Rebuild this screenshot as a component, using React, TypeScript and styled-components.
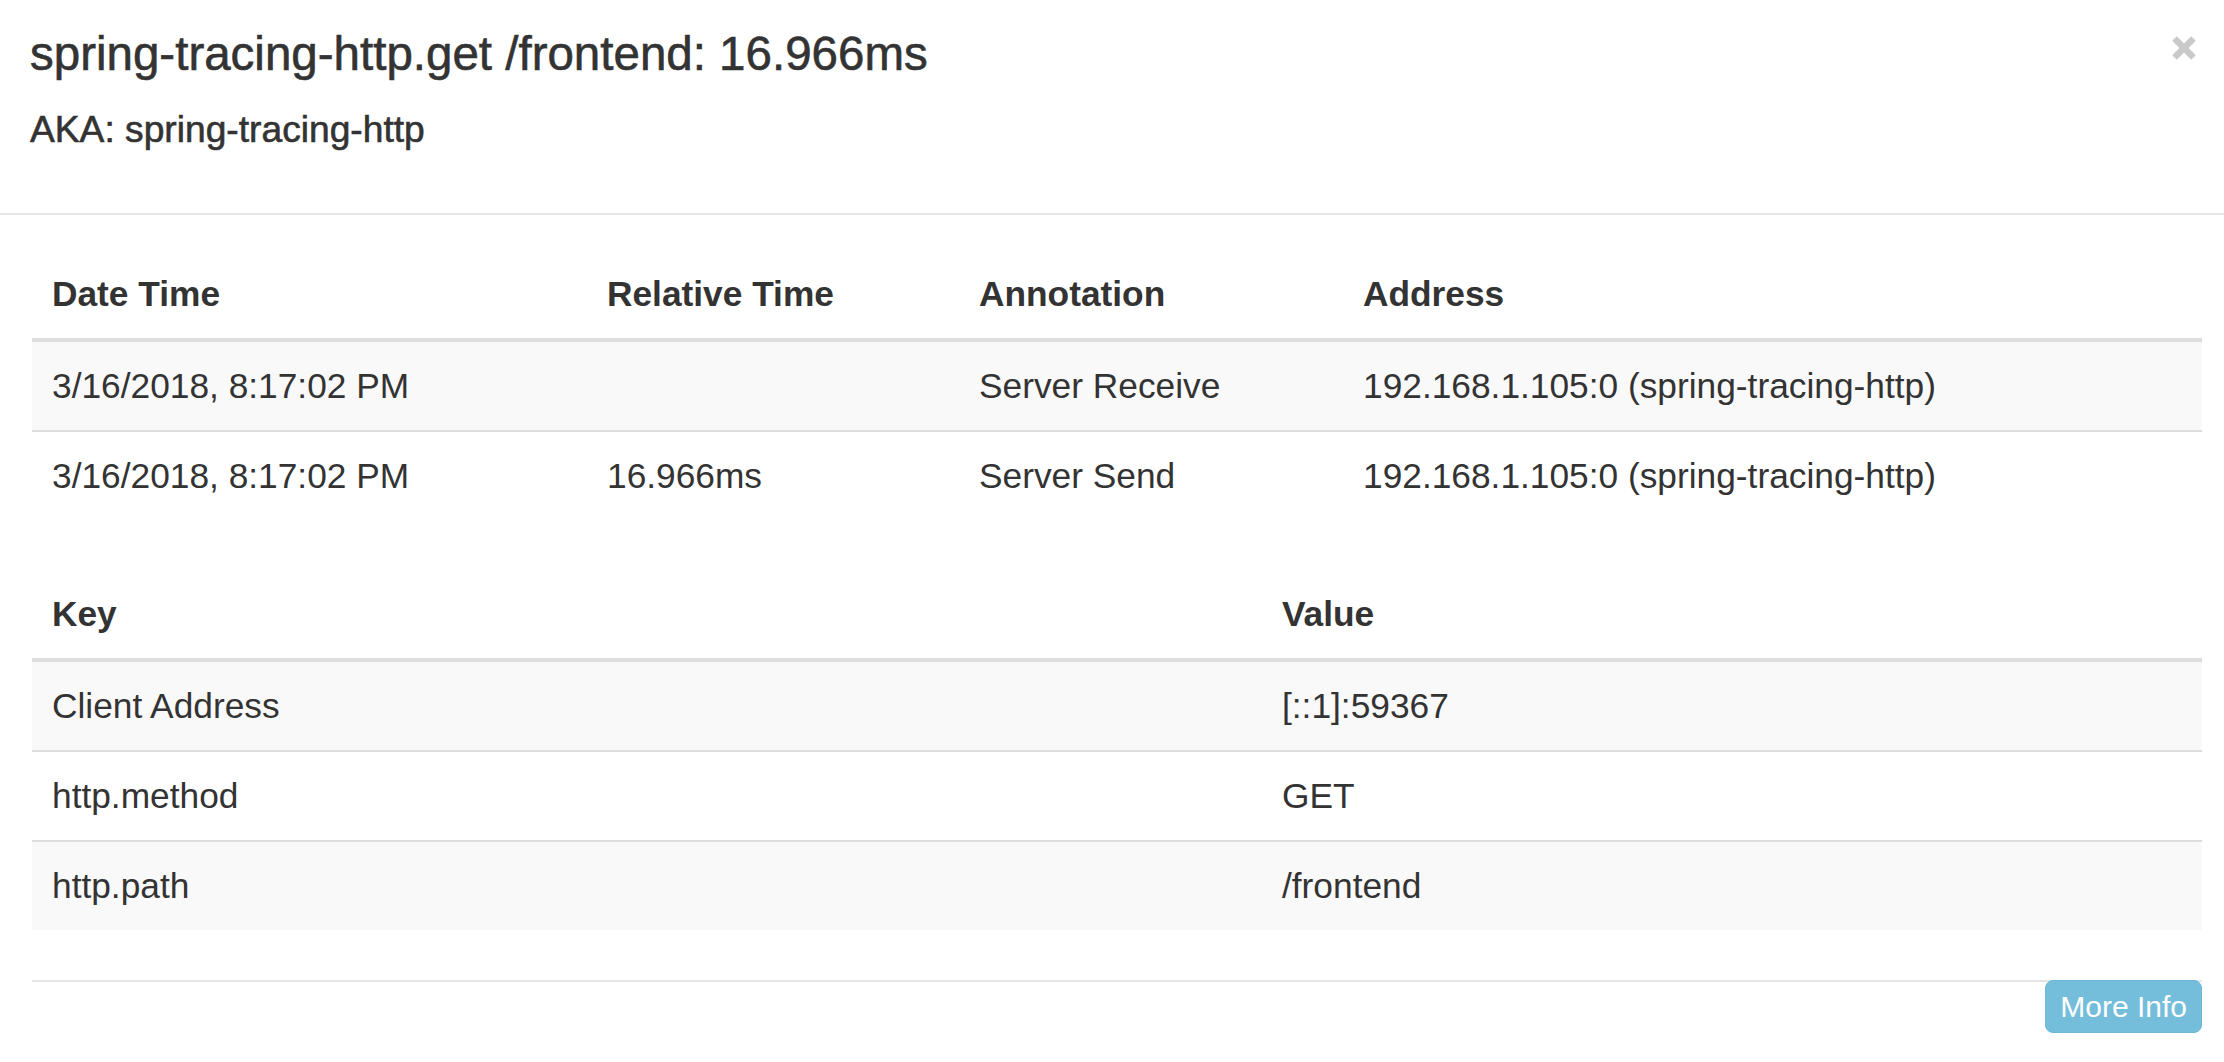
import React from "react";
import styled, { createGlobalStyle } from "styled-components";

const GlobalStyle = createGlobalStyle`
  html, body {
    margin: 0;
    padding: 0;
    background: #ffffff;
  }
  body {
    font-family: "Liberation Sans", Arial, "Helvetica Neue", sans-serif;
    color: #333333;
  }
  * { box-sizing: border-box; }
`;

const Modal = styled.div`
  width: 2224px;
  background: #ffffff;
  display: flex;
  flex-direction: column;
`;

const Header = styled.div`
  display: flex;
  justify-content: space-between;
  align-items: flex-start;
  padding: 22px 27px 64px 30px;
  border-bottom: 2px solid #e5e5e5;
`;

const TitleBlock = styled.div`
  display: flex;
  flex-direction: column;
`;

const Title = styled.h4`
  margin: 0;
  font-size: 47.5px;
  line-height: 64px;
  font-weight: 400;
  color: #333333;
  -webkit-text-stroke: 0.6px #333333;
`;

const Aka = styled.h5`
  margin: 23px 0 0 0;
  font-size: 37.2px;
  line-height: 40px;
  font-weight: 400;
  color: #333333;
  -webkit-text-stroke: 0.6px #333333;
`;

const CloseButton = styled.button`
  margin-top: 13px;
  padding: 0;
  border: 0;
  background: transparent;
  width: 26px;
  height: 26px;
  display: flex;
  cursor: pointer;
`;

const Body = styled.div`
  padding: 35px 22px 0 32px;
`;

const DataTable = styled.table`
  width: 100%;
  table-layout: fixed;
  border-collapse: separate;
  border-spacing: 0;
  margin-bottom: 50px;
  font-size: 35.3px;
  color: #333333;
`;

const Col = styled.col<{ $w: number }>`
  width: ${(p) => p.$w}px;
`;

const HeadCell = styled.th`
  text-align: left;
  font-weight: 700;
  padding: 19px 20px;
  line-height: 50px;
  border-bottom: 4px solid #dddddd;
  white-space: nowrap;
`;

const Row = styled.tr`
  &:nth-of-type(odd) td {
    background: #f9f9f9;
  }
  & + & td {
    border-top: 2px solid #dddddd;
  }
`;

const Cell = styled.td`
  padding: 19px 20px;
  line-height: 50px;
  font-weight: 400;
  white-space: nowrap;
  vertical-align: top;
`;

const Footer = styled.div`
  margin: 0 22px 0 32px;
  border-top: 2px solid #e5e5e5;
  display: flex;
  justify-content: flex-end;
  padding-bottom: 29px;
`;

const InfoButton = styled.button`
  margin-top: -2px;
  height: 53px;
  padding: 0 14px;
  border: 1px solid #6bb8d8;
  border-radius: 8px;
  background: #74bddb;
  color: #ffffff;
  font-family: "Liberation Sans", Arial, sans-serif;
  font-size: 30px;
  line-height: 51px;
  cursor: pointer;
`;

const annotations = [
  {
    date: "3/16/2018, 8:17:02 PM",
    relative: "",
    annotation: "Server Receive",
    address: "192.168.1.105:0 (spring-tracing-http)",
  },
  {
    date: "3/16/2018, 8:17:02 PM",
    relative: "16.966ms",
    annotation: "Server Send",
    address: "192.168.1.105:0 (spring-tracing-http)",
  },
];

const tags = [
  { key: "Client Address", value: "[::1]:59367" },
  { key: "http.method", value: "GET" },
  { key: "http.path", value: "/frontend" },
];

export default function App() {
  return (
    <>
      <GlobalStyle />
      <Modal>
        <Header>
          <TitleBlock>
            <Title>spring-tracing-http.get /frontend: 16.966ms</Title>
            <Aka>AKA: spring-tracing-http</Aka>
          </TitleBlock>
          <CloseButton aria-label="Close">
            <svg width="26" height="26" viewBox="0 0 26 26">
              <path
                d="M3.5 3.5 L22.5 22.5 M22.5 3.5 L3.5 22.5"
                stroke="#c9c9c9"
                strokeWidth="6.5"
                fill="none"
              />
            </svg>
          </CloseButton>
        </Header>
        <Body>
          <DataTable>
            <colgroup>
              <Col $w={555} />
              <Col $w={372} />
              <Col $w={384} />
              <Col $w={859} />
            </colgroup>
            <thead>
              <tr>
                <HeadCell>Date Time</HeadCell>
                <HeadCell>Relative Time</HeadCell>
                <HeadCell>Annotation</HeadCell>
                <HeadCell>Address</HeadCell>
              </tr>
            </thead>
            <tbody>
              {annotations.map((a, i) => (
                <Row key={i}>
                  <Cell>{a.date}</Cell>
                  <Cell>{a.relative}</Cell>
                  <Cell>{a.annotation}</Cell>
                  <Cell>{a.address}</Cell>
                </Row>
              ))}
            </tbody>
          </DataTable>
          <DataTable>
            <colgroup>
              <Col $w={1230} />
              <Col $w={940} />
            </colgroup>
            <thead>
              <tr>
                <HeadCell>Key</HeadCell>
                <HeadCell>Value</HeadCell>
              </tr>
            </thead>
            <tbody>
              {tags.map((t) => (
                <Row key={t.key}>
                  <Cell>{t.key}</Cell>
                  <Cell>{t.value}</Cell>
                </Row>
              ))}
            </tbody>
          </DataTable>
        </Body>
        <Footer>
          <InfoButton>More Info</InfoButton>
        </Footer>
      </Modal>
    </>
  );
}
